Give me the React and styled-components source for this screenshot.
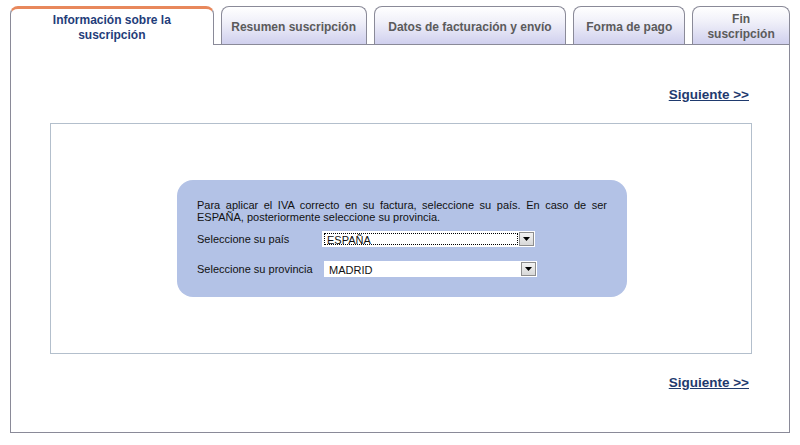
import React from "react";
import styled, { createGlobalStyle } from "styled-components";

const Global = createGlobalStyle`
  html, body { margin: 0; padding: 0; background: #ffffff; }
  body { font-family: "Liberation Sans", Arial, sans-serif; }
`;

const Page = styled.div`
  width: 800px;
  height: 445px;
  padding: 6px 10px 0 10px;
  box-sizing: border-box;
`;

const TabBar = styled.div`
  display: flex;
  align-items: flex-end;
  gap: 7px;
  border-bottom: 1px solid #8a8a98;
  height: 38px;
`;

const Tab = styled.div`
  box-sizing: border-box;
  width: ${(p) => p.$w}px;
  height: ${(p) => (p.$active ? 39 : 38)}px;
  margin-bottom: ${(p) => (p.$active ? -1 : 0)}px;
  border: 1px solid #8a8a98;
  border-bottom: none;
  border-top: ${(p) => (p.$active ? "3px solid #e8885c" : "1px solid #8a8a98")};
  border-radius: 8px 8px 0 0;
  background: ${(p) =>
    p.$active ? "#ffffff" : "linear-gradient(to bottom, #ffffff 0%, #f0f0f9 40%, #d0d0ee 100%)"};
  display: flex;
  align-items: center;
  justify-content: center;
  text-align: center;
  font-size: 12px;
  font-weight: bold;
  line-height: 15px;
  color: ${(p) => (p.$active ? "#1f3d7a" : "#5b5b5b")};
  padding: ${(p) => (p.$active ? "2px 0 0 0" : "3px 0 0 0")};
`;

const Panel = styled.div`
  box-sizing: border-box;
  height: 388px;
  border: 1px solid #8a8a98;
  border-top: none;
  padding: 42px 40px 0 39px;
`;

const LinkRow = styled.div`
  display: flex;
  justify-content: flex-end;
  height: 16px;
  line-height: 16px;
  margin-top: ${(p) => p.$mt || 0}px;
`;

const NextLink = styled.a`
  font-size: 13.5px;
  font-weight: bold;
  color: #1f3a6e;
  text-decoration: underline;
  cursor: pointer;
`;

const InnerBox = styled.div`
  box-sizing: border-box;
  height: 231px;
  margin-top: 20px;
  margin-right: -3px;
  border: 1px solid #b3bfcc;
  display: flex;
  align-items: center;
  justify-content: center;
`;

const BlueBox = styled.div`
  box-sizing: border-box;
  width: 450px;
  height: 117px;
  margin-left: 2px;
  background: #b3c2e6;
  border-radius: 16px;
  padding: 19px 20px 0 20px;
  font-size: 11px;
  color: #111;
`;

const Intro = styled.p`
  margin: 0 0 8px 0;
  line-height: 12px;
  text-align: justify;
`;

const Row = styled.div`
  display: flex;
  align-items: center;
  height: 16px;
  margin-bottom: ${(p) => p.$mb || 0}px;
`;

const Label = styled.span`
  width: ${(p) => p.$w}px;
  flex: none;
`;

const Select = styled.div`
  box-sizing: border-box;
  width: 213px;
  height: 16px;
  background: #fff;
  display: flex;
  align-items: stretch;
  padding: 1px;
  border: 1px solid #ffffff;
`;

const SelectText = styled.div`
  flex: 1;
  font-size: 11px;
  line-height: 12px;
  padding-left: 2px;
  border: 1px ${(p) => (p.$focus ? "dotted #000" : "solid transparent")};
  margin-right: 1px;
`;

const DropBtn = styled.div`
  width: 15px;
  box-sizing: border-box;
  border: 1px solid #8e8e8e;
  background: linear-gradient(to bottom, #f2f2f2, #d8d8d8);
  display: flex;
  align-items: center;
  justify-content: center;
  margin: -1px -1px -1px 0;
`;

const Arrow = () => (
  <svg width="7" height="4" viewBox="0 0 7 4">
    <polygon points="0,0 7,0 3.5,4" fill="#000" />
  </svg>
);

export default function App() {
  const tabs = [
    { w: 204, label: <>Información sobre la<br />suscripción</>, active: true },
    { w: 146, label: "Resumen suscripción" },
    { w: 193, label: "Datos de facturación y envío" },
    { w: 112, label: "Forma de pago" },
    { w: 98, label: <>Fin<br />suscripción</> },
  ];
  return (
    <>
      <Global />
      <Page>
        <TabBar>
          {tabs.map((t, i) => (
            <Tab key={i} $w={t.w} $active={t.active}>
              {t.label}
            </Tab>
          ))}
        </TabBar>
        <Panel>
          <LinkRow>
            <NextLink>Siguiente &gt;&gt;</NextLink>
          </LinkRow>
          <InnerBox>
            <BlueBox>
              <Intro>
                Para aplicar el IVA correcto en su factura, seleccione su país. En caso de ser
                ESPAÑA, posteriormente seleccione su provincia.
              </Intro>
              <Row $mb={14}>
                <Label $w={125}>Seleccione su país</Label>
                <Select>
                  <SelectText $focus>ESPAÑA</SelectText>
                  <DropBtn><Arrow /></DropBtn>
                </Select>
              </Row>
              <Row>
                <Label $w={127}>Seleccione su provincia</Label>
                <Select>
                  <SelectText>MADRID</SelectText>
                  <DropBtn><Arrow /></DropBtn>
                </Select>
              </Row>
            </BlueBox>
          </InnerBox>
          <LinkRow $mt={21}>
            <NextLink>Siguiente &gt;&gt;</NextLink>
          </LinkRow>
        </Panel>
      </Page>
    </>
  );
}
